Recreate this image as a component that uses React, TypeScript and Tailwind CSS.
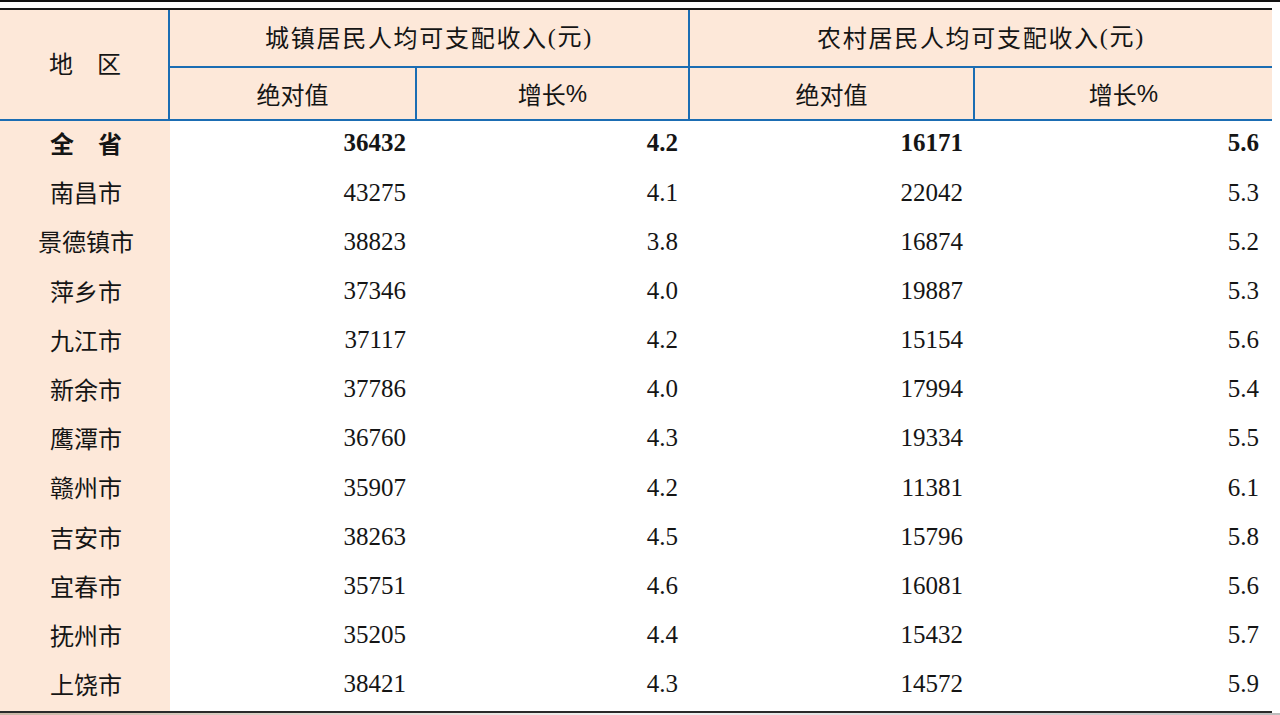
import React from "react";

const rows: [string, string, string, string, string][] = [
  ["全　省", "36432", "4.2", "16171", "5.6"],
  ["南昌市", "43275", "4.1", "22042", "5.3"],
  ["景德镇市", "38823", "3.8", "16874", "5.2"],
  ["萍乡市", "37346", "4.0", "19887", "5.3"],
  ["九江市", "37117", "4.2", "15154", "5.6"],
  ["新余市", "37786", "4.0", "17994", "5.4"],
  ["鹰潭市", "36760", "4.3", "19334", "5.5"],
  ["赣州市", "35907", "4.2", "11381", "6.1"],
  ["吉安市", "38263", "4.5", "15796", "5.8"],
  ["宜春市", "35751", "4.6", "16081", "5.6"],
  ["抚州市", "35205", "4.4", "15432", "5.7"],
  ["上饶市", "38421", "4.3", "14572", "5.9"],
];

const sans = "font-['Noto_Sans_CJK_SC','Noto_Sans',sans-serif]";
const serif = "font-['Liberation_Serif','Noto_Sans_CJK_SC',serif]";

export default function App() {
  return (
    <div className="w-[1280px] h-[715px] bg-white overflow-hidden text-[#151515]">
      <div className="h-[2px] bg-[#111]" />
      <div className="h-[6px]" />
      <div className="w-[1272px] border-t-2 border-[#1a1a1a]">
        {/* header */}
        <div className="grid grid-cols-[170px_247px_273px_285px_297px] grid-rows-[58px_51px] bg-[#fde8d9] border-b-2 border-[#1b6db3]">
          <div className={`row-span-2 border-r-2 border-[#1b6db3] flex items-center justify-center pb-[4px] pl-[2px] text-[24px] ${sans}`}>
            地　区
          </div>
          <div className={`col-span-2 border-r-2 border-b-2 border-[#1b6db3] flex items-center justify-center pb-[2px] text-[24px] tracking-[1.7px] ${sans}`}>
            城镇居民人均可支配收入<span className={serif}>(元)</span>
          </div>
          <div className={`col-span-2 border-b-2 border-[#1b6db3] flex items-center justify-center pb-[2px] text-[24px] tracking-[1.7px] ${sans}`}>
            农村居民人均可支配收入<span className={serif}>(元)</span>
          </div>
          <div className={`border-r-2 border-[#1b6db3] flex items-center justify-center text-[24px] ${sans}`}>绝对值</div>
          <div className={`border-r-2 border-[#1b6db3] flex items-center justify-center text-[24px] ${sans}`}>
            增长<span className="font-['Liberation_Sans',sans-serif]">%</span>
          </div>
          <div className={`border-r-2 border-[#1b6db3] flex items-center justify-center text-[24px] ${sans}`}>绝对值</div>
          <div className={`flex items-center justify-center text-[24px] ${sans}`}>
            增长<span className="font-['Liberation_Sans',sans-serif]">%</span>
          </div>
        </div>
        {/* body */}
        <div className="border-b-2 border-[#2a2a2a]">
          {rows.map((r, i) => {
            const bold = i === 0 ? "font-bold" : "";
            return (
              <div key={i} className="grid grid-cols-[170px_247px_273px_285px_297px] h-[49.2px]">
                <div className={`bg-[#fde8d9] flex items-center justify-center pb-[5px] pl-[2px] text-[24px] ${sans} ${bold}`}>{r[0]}</div>
                <div className={`flex items-center justify-end pb-[5px] pr-[11px] text-[25px] ${serif} ${bold}`}>{r[1]}</div>
                <div className={`flex items-center justify-end pb-[5px] pr-[12px] text-[25px] ${serif} ${bold}`}>{r[2]}</div>
                <div className={`flex items-center justify-end pb-[5px] pr-[12px] text-[25px] ${serif} ${bold}`}>{r[3]}</div>
                <div className={`flex items-center justify-end pb-[5px] pr-[13px] text-[25px] ${serif} ${bold}`}>{r[4]}</div>
              </div>
            );
          })}
        </div>
      </div>
      <div className="h-[4px] bg-gradient-to-r from-[#c9b7a6] via-[#f2f2f2] to-[#bdbdbd]" />
    </div>
  );
}
